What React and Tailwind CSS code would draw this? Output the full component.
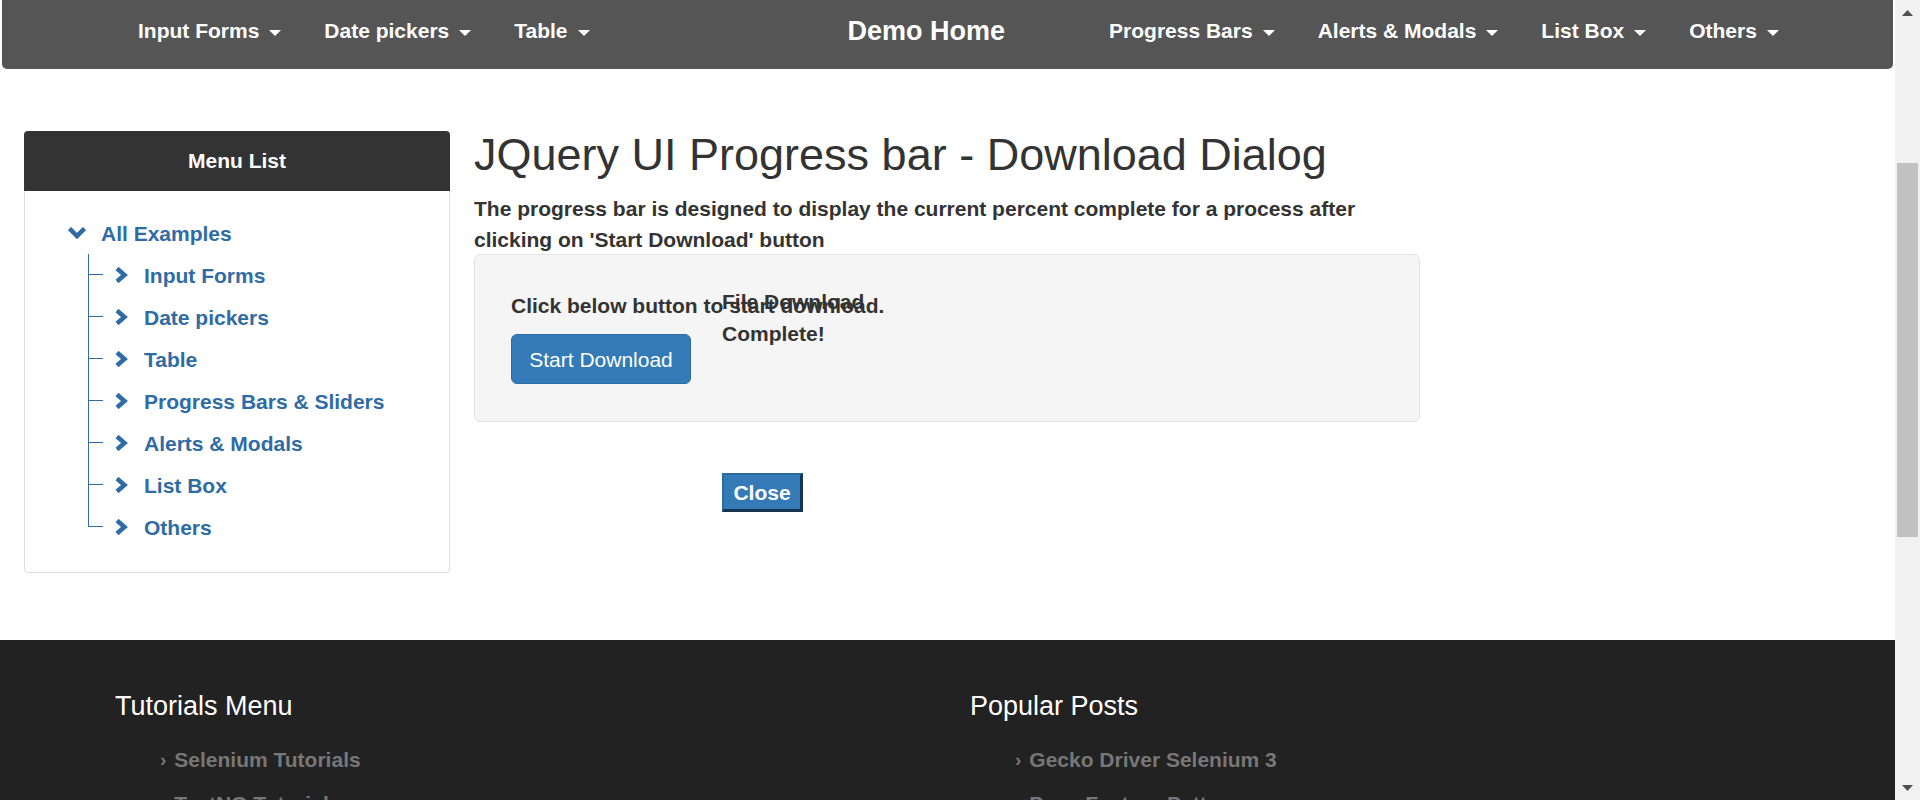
import React from 'react';

const FONT = "font-['Liberation_Sans',Arial,Helvetica,sans-serif]";

const LEFT_NAV = ['Input Forms', 'Date pickers', 'Table'];
const RIGHT_NAV = ['Progress Bars', 'Alerts & Modals', 'List Box', 'Others'];
const TREE_ITEMS = ['Input Forms', 'Date pickers', 'Table', 'Progress Bars & Sliders', 'Alerts & Modals', 'List Box', 'Others'];
const TUTORIALS = ['Selenium Tutorials', 'TestNG Tutorials', 'Bootstrap Tutorials'];
const POSTS = ['Gecko Driver Selenium 3', 'Page Factory Pattern', 'Selenium Grid'];

const TREE_BLUE = '#2f6ca5';

function Caret() {
    return (
        <svg width="12" height="6" viewBox="0 0 12 6" className="ml-[10px] mt-[4px]">
            <polygon points="0,0 12,0 6,6" fill="#ffffff" />
        </svg>
    );
}

function NavItem({ label }) {
    return (
        <a className="h-[21px] flex items-center text-white text-[21px] font-bold leading-none cursor-pointer">
            <span>{label}</span>
            <Caret />
        </a>
    );
}

function ChevronRight() {
    return (
        <svg width="14" height="16" viewBox="0 0 14 16" className="shrink-0">
            <path d="M3 1.5 L10.5 8 L3 14.5" fill="none" stroke={TREE_BLUE} strokeWidth="4.5" strokeLinejoin="miter" />
        </svg>
    );
}

function ChevronDown() {
    return (
        <svg width="18" height="12" viewBox="0 0 18 12" className="shrink-0">
            <path d="M1.5 1.5 L9 9 L16.5 1.5" fill="none" stroke={TREE_BLUE} strokeWidth="4.5" strokeLinejoin="miter" />
        </svg>
    );
}

function MenuPanel() {
    return (
        <div className="w-[426px] shrink-0 flex flex-col">
            <div className="h-[60px] bg-[#333333] rounded-t-[4px] flex items-center justify-center text-white text-[21px] font-bold">
                Menu List
            </div>
            <div className="border border-t-0 border-[#dddddd] rounded-b-[4px] pt-[21px] pb-[24px]">
                <div className="h-[42px] flex items-center pl-[43px]">
                    <ChevronDown />
                    <span className="ml-[15px] text-[#2f6ca5] text-[21px] font-bold leading-none">All Examples</span>
                </div>
                <div className="ml-[63px]">
                    {TREE_ITEMS.map((item, index) => {
                        const last = index === TREE_ITEMS.length - 1;
                        return (
                            <div key={item} className="h-[42px] flex items-center">
                                <div className="w-[15px] h-full flex flex-col shrink-0">
                                    <div className="h-[21px] border-l border-b border-[#2f6ca5]"></div>
                                    <div className={last ? 'flex-1' : 'flex-1 border-l border-[#2f6ca5]'}></div>
                                </div>
                                <div className="ml-[11px] flex items-center">
                                    <ChevronRight />
                                </div>
                                <span className="ml-[16px] text-[#2f6ca5] text-[21px] font-bold leading-none">{item}</span>
                            </div>
                        );
                    })}
                </div>
            </div>
        </div>
    );
}

function Scrollbar() {
    return (
        <div className="w-[25px] h-[800px] shrink-0 bg-[#f1f1f1] flex flex-col">
            <div className="h-[25px] flex items-center justify-center">
                <svg width="11" height="6" viewBox="0 0 11 6">
                    <polygon points="0,6 11,6 5.5,0" fill="#505050" />
                </svg>
            </div>
            <div className="mt-[138px] h-[374px] mx-[2px] bg-[#c1c1c1]"></div>
            <div className="flex-1"></div>
            <div className="h-[25px] flex items-center justify-center">
                <svg width="11" height="6" viewBox="0 0 11 6">
                    <polygon points="0,0 11,0 5.5,6" fill="#505050" />
                </svg>
            </div>
        </div>
    );
}

function FooterColumn({ title, links, width }) {
    return (
        <div className={width}>
            <h3 className="text-white text-[27px] leading-[1.1] font-normal">{title}</h3>
            <ul className="mt-[16px]">
                {links.map(link => (
                    <li key={link} className="h-[44px] flex items-center pl-[45px] text-[#777777] text-[21px] font-bold">
                        <span className="text-[19px] mt-[2px]">›</span>
                        <span className="ml-[8px]">{link}</span>
                    </li>
                ))}
            </ul>
        </div>
    );
}

export default function App() {
    return (
        <div className={`${FONT} flex w-full h-[800px] overflow-hidden bg-white`}>
            <div className="w-[1895px] shrink-0 flex flex-col">
                {/* top navbar */}
                <nav className="mx-[2px] h-[69px] shrink-0 bg-[#555555] rounded-b-[5px] flex items-start">
                    <div className="pl-[136px] pt-[20px] flex items-start gap-[43px]">
                        {LEFT_NAV.map(item => <NavItem key={item} label={item} />)}
                    </div>
                    <a className="ml-[258px] pt-[18px] text-white text-[27px] font-bold leading-none cursor-pointer">Demo Home</a>
                    <div className="ml-[104px] pt-[20px] flex items-start gap-[43px]">
                        {RIGHT_NAV.map(item => <NavItem key={item} label={item} />)}
                    </div>
                </nav>

                <div className="flex gap-[24px] pl-[24px] pt-[62px] pb-[67px]">
                    <MenuPanel />
                    <div className="relative w-[946px] text-[#333333]">
                        <h2 className="mt-[-1px] text-[45px] leading-[1.1] font-normal">JQuery UI Progress bar - Download Dialog</h2>
                        <p className="mt-[13px] text-[21px] leading-[31.5px] font-bold">
                            The progress bar is designed to display the current percent complete for a process after clicking on 'Start Download' button
                        </p>
                        <div className="mt-[-2px] border border-[#e3e3e3] bg-[#f5f5f5] rounded-[6px] pt-[35px] pb-[37px] pl-[36px]">
                            <div className="text-[21px] leading-[31.5px] font-bold">Click below button to start download.</div>
                            <button className="mt-[13px] h-[50px] w-[180px] bg-[#337ab7] border border-[#2e6da4] rounded-[6px] text-white text-[21px] leading-none">
                                Start Download
                            </button>
                        </div>

                        {/* unstyled dialog sitting over the well */}
                        <div className="absolute left-[248px] top-[155px] w-[160px]">
                            <div className="text-[21px] leading-[31.5px] font-bold">File Download Complete!</div>
                            <button className="mt-[124px] w-[81px] h-[39px] flex items-center justify-center bg-[#337ab7] border-t-2 border-l-2 border-r-[3px] border-b-[3px] border-t-[#2d6aa0] border-l-[#2d6aa0] border-r-[#173553] border-b-[#173553] text-white text-[21px] font-bold leading-none">
                                Close
                            </button>
                        </div>
                    </div>
                </div>

                <footer className="flex-1 bg-[#222222] pt-[52px] pl-[115px] flex">
                    <FooterColumn title="Tutorials Menu" links={TUTORIALS} width="w-[855px]" />
                    <FooterColumn title="Popular Posts" links={POSTS} width="w-[600px]" />
                </footer>
            </div>
            <Scrollbar />
        </div>
    );
}
